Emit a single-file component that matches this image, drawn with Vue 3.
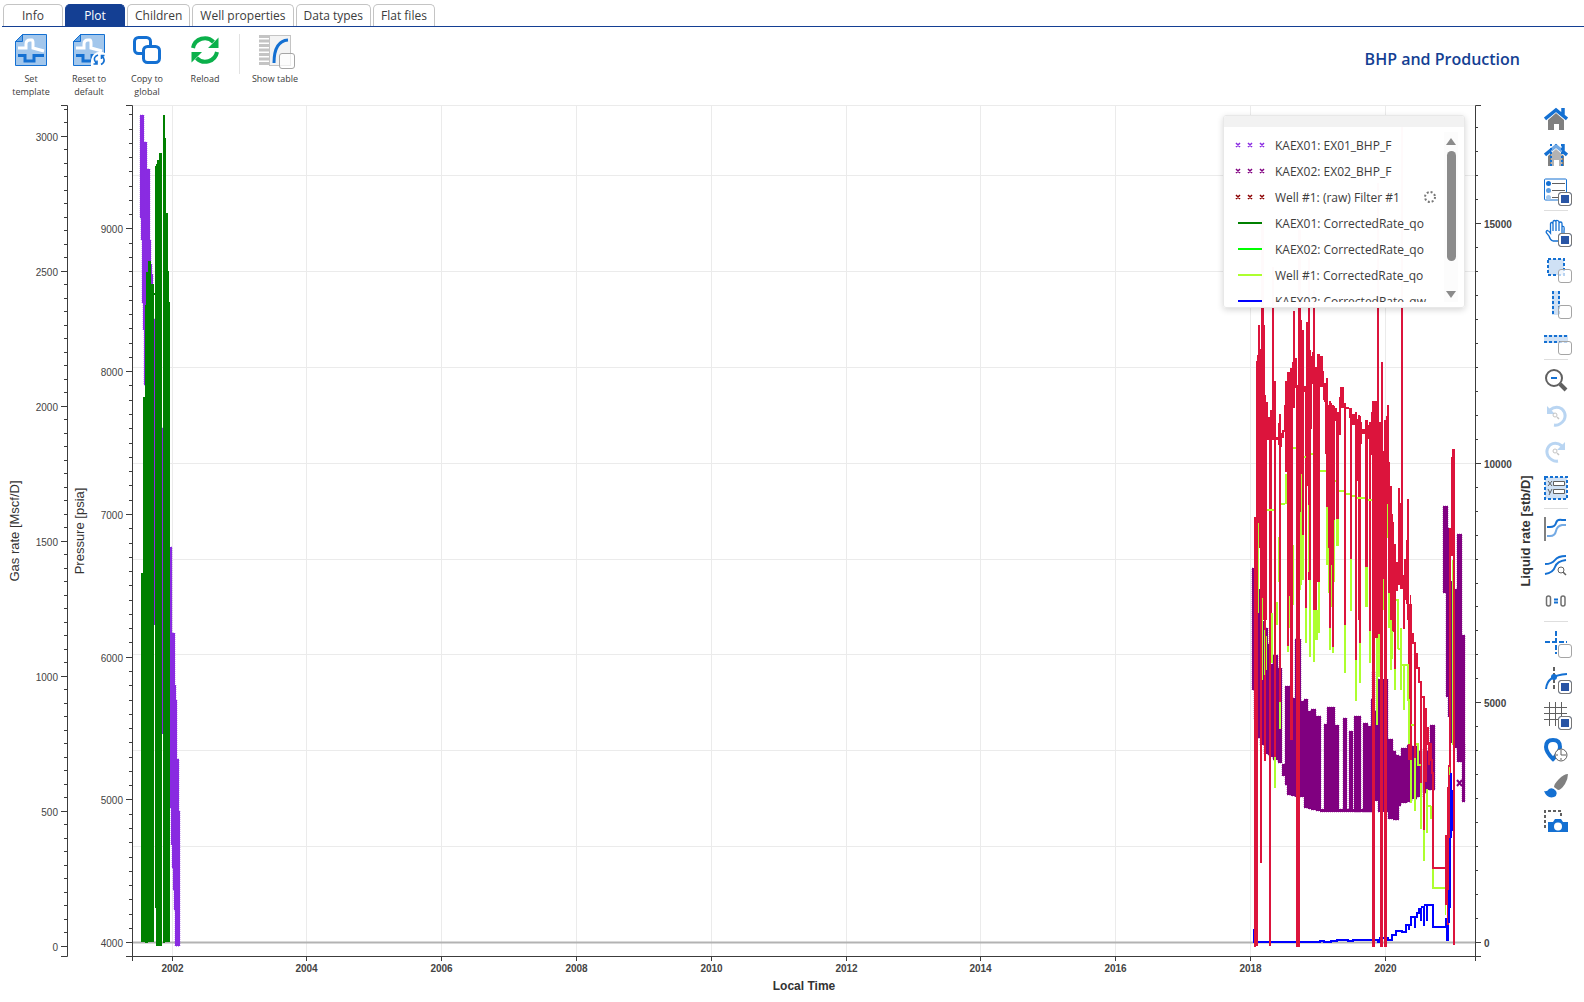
<template>
    <div class="page">
        <nav class="tabs" role="tablist">
            <button
                v-for="tab in tabs"
                :key="tab"
                class="tab"
                role="tab"
                :class="{ active: tab === activeTab }"
                :aria-selected="tab === activeTab"
                @click="activeTab = tab"
            >{{ tab }}</button>
        </nav>

        <header class="toolbar">
            <button class="tool">
                <svg width="32" height="32" viewBox="0 0 32 32">
                    <path d="M7.500 .5H31.500V31.500H.5V7.500Z" fill="#a3c7ec" stroke="#1470d2" />
                    <path d="M.5 7.500H7.500V.5Z" fill="#68a5e3" stroke="#1470d2" />
                    <path d="M3 14H11V10Q11 6 15 6H17Q18 6 18 9V14L29 17" fill="none" stroke="#fff" stroke-width="3" />
                    <path d="M3 21.500H10V27H19V21.500H29" fill="none" stroke="#1470d2" stroke-width="3" />
                </svg>
                <span>Set<br>template</span>
            </button>
            <button class="tool">
                <svg width="32" height="32" viewBox="0 0 32 32">
                    <path d="M7.500 .5H31.500V31.500H.5V7.500Z" fill="#a3c7ec" stroke="#1470d2" />
                    <path d="M.5 7.500H7.500V.5Z" fill="#68a5e3" stroke="#1470d2" />
                    <path d="M3 14H11V10Q11 6 15 6H17Q18 6 18 9V14L29 17" fill="none" stroke="#fff" stroke-width="3" />
                    <path d="M3 21.500H10V27H19V21.500H24" fill="none" stroke="#1470d2" stroke-width="3" />
                    <path d="M18 32Q17 24 21 20Q26 16 32 19V32Z" fill="#fff" />
                    <path d="M25 21Q20 23 22 27L23.500 30M28 30.500Q32.500 28 30.500 24L29 21.500M20.500 30H24V26.500M31.500 21.500H28.500V25" fill="none" stroke="#1470d2" stroke-width="1.600" />
                </svg>
                <span>Reset to<br>default</span>
            </button>
            <button class="tool">
                <svg width="32" height="32" viewBox="0 0 32 32" fill="#fff" stroke="#1470d2" stroke-width="3">
                    <rect x="3.500" y="3.500" width="16" height="16" rx="4" />
                    <rect x="12.500" y="12.500" width="16" height="16" rx="4" />
                </svg>
                <span>Copy to<br>global</span>
            </button>
            <button class="tool">
                <svg width="32" height="32" viewBox="0 0 32 32">
                    <path d="M4 14A12 12 0 0 1 24.500 8M28 18A12 12 0 0 1 7.500 24" fill="none" stroke="#0bb04b" stroke-width="4" />
                    <path d="M29.500 3.500V14H19ZM2.500 28.500V18H13Z" fill="#0bb04b" />
                </svg>
                <span>Reload</span>
            </button>
            <i class="divider"></i>
            <div class="tool table-tool">
                <span class="pic">
                    <svg width="32" height="32" viewBox="0 0 32 32">
                        <rect x="10.500" y="1.500" width="21" height="30" fill="#f3f3f3" stroke="#c4c4c4" />
                        <path d="M0 2.500H10M0 7H10M0 11.500H10M0 16H10M0 20.500H10M0 25H10M0 29.500H10" stroke="#c4c4c4" stroke-width="3" />
                        <path d="M15 29Q15 7 29 6" fill="none" stroke="#1470d2" stroke-width="3" />
                    </svg>
                    <input id="show-table" type="checkbox" class="badge">
                </span>
                <label for="show-table">Show table</label>
            </div>
            <h1>BHP and Production</h1>
        </header>

        <main class="body">
            <div class="chart">
                <svg class="plot" viewBox="0 100 1536 900">
                    <g class="grid">
                        <path v-for="y in gridY" :key="'gy' + y" :d="`M133 ${y}H1475`" />
                        <path v-for="t in years" :key="'gx' + t.label" :d="`M${t.x} 105V956`" />
                    </g>
                    <path d="M133 942.5H1475" stroke="#b3b3b3" stroke-width="2" />

                    <g v-for="s in markerSeries" :key="s.color" :fill="s.color" :stroke="s.color">
                        <path :d="bars(s.data)" stroke="none" />
                        <path :d="bars(s.data)" fill="none" stroke-opacity="0.5" stroke-dasharray="1 1" />
                    </g>
                    <path d="M1457 780l5 6m0-6l-5 6" stroke="#800080" stroke-width="2" />

                    <path :d="bars(green)" fill="#008000" />
                    <path :d="blueLine" fill="none" stroke="#0000ff" stroke-width="2" />
                    <path :d="bars(red)" fill="#dc143c" />
                    <path :d="redLine" fill="none" stroke="#dc143c" stroke-width="2" />
                    <path :d="bars(lime)" fill="#adff2f" />
                    <path :d="limeLine" fill="none" stroke="#adff2f" stroke-width="2" />
                    <path :d="bars(blue)" fill="#0000ff" />

                    <!-- axes -->
                    <g class="axis">
                        <path d="M61 105.5H67.500V956.500H61" />
                        <path d="M126 105.5H132.500V961M126 956.500H1481M1475.500 961V105.500H1481" />
                        <path :d="tickMarks" />
                    </g>
                    <g class="ticks">
                        <text v-for="t in gas" :key="'g' + t.label" x="58" :y="t.y + 4" text-anchor="end">{{ t.label }}</text>
                        <text v-for="t in pressure" :key="'p' + t.label" x="123" :y="t.y + 4" text-anchor="end">{{ t.label }}</text>
                        <text v-for="t in liquid" :key="'l' + t.label" class="bold" x="1484" :y="t.y + 4">{{ t.label }}</text>
                        <text v-for="t in years" :key="'y' + t.label" class="bold" :x="t.x" y="972" text-anchor="middle">{{ t.label }}</text>
                    </g>
                    <text class="title" transform="translate(19 531) rotate(-90)">Gas rate [Mscf/D]</text>
                    <text class="title" transform="translate(84 531) rotate(-90)">Pressure [psia]</text>
                    <text class="title bold" transform="translate(1530 531) rotate(-90)">Liquid rate [stb/D]</text>
                    <text class="title local bold" x="804" y="990">Local Time</text>
                </svg>

                <section class="legend">
                    <div class="grip"></div>
                    <div class="legend-body">
                        <ul>
                            <li v-for="item in legend" :key="item.name">
                                <svg width="30" height="8" viewBox="0 0 30 8" fill="none" :stroke="item.color">
                                    <path v-if="item.marker" d="M1 2l4 4m0-4l-4 4M13 2l4 4m0-4l-4 4M25 2l4 4m0-4l-4 4" stroke-width="1.500" />
                                    <path v-else d="M3 4H27" stroke-width="2" />
                                </svg>
                                <span>{{ item.name }}</span>
                                <svg v-if="item.loading" class="spinner" width="14" height="14" viewBox="0 0 14 14">
                                    <circle cx="7" cy="7" r="5" fill="none" stroke="#777" stroke-width="2" stroke-dasharray="2 1.927" />
                                </svg>
                            </li>
                        </ul>
                        <div class="scrollbar">
                            <i class="up"></i>
                            <i class="thumb"></i>
                            <i class="down"></i>
                        </div>
                    </div>
                </section>
            </div>

            <aside class="side">
                <template v-for="(icon, i) in sideIcons" :key="i">
                    <hr v-if="icon.sep">
                    <div v-else-if="icon.check !== undefined" class="side-item">
                        <svg width="24" height="24" viewBox="0 0 24 24" v-html="icon.art"></svg>
                        <input type="checkbox" class="badge" :aria-label="icon.name" :checked="icon.check">
                    </div>
                    <button v-else class="side-item" :aria-label="icon.name">
                        <svg width="24" height="24" viewBox="0 0 24 24" v-html="icon.art"></svg>
                    </button>
                </template>
            </aside>
        </main>
    </div>
</template>

<script setup>
import { ref } from 'vue'

const tabs = ['Info', 'Plot', 'Children', 'Well properties', 'Data types', 'Flat files']
const activeTab = ref('Plot')

const legend = [
    { name: 'KAEX01: EX01_BHP_F', color: '#8a2be2', marker: true },
    { name: 'KAEX02: EX02_BHP_F', color: '#800080', marker: true },
    { name: 'Well #1: (raw) Filter #1', color: '#8b0000', marker: true, loading: true },
    { name: 'KAEX01: CorrectedRate_qo', color: '#008000' },
    { name: 'KAEX02: CorrectedRate_qo', color: '#00ff00' },
    { name: 'Well #1: CorrectedRate_qo', color: '#adff2f' },
    { name: 'KAEX02: CorrectedRate_qw', color: '#0000ff' },
]

// axis scales
const gasY = v => Math.floor(946.5 - v * 0.27006) + 0.5
const pressureY = v => Math.floor(942.7 - (v - 4000) * 0.14275) + 0.5
const liquidY = v => Math.round(942 - v * 0.04793) + 0.5
const yearX = v => Math.floor(172 + (v - 2002) * 67.4) + 0.5

function range(from, to, step)
{
    const out = []
    for (let v = from; v <= to; v += step) out.push(v)
    return out
}

const gas = range(0, 3000, 500).map(v => ({ label: v, y: gasY(v) }))
const pressure = range(4000, 9000, 1000).map(v => ({ label: v, y: pressureY(v) }))
const liquid = range(0, 15000, 5000).map(v => ({ label: v, y: liquidY(v) }))
const years = range(2002, 2020, 2).map(v => ({ label: v, x: yearX(v) }))
const gridY = [105.5, ...range(2000, 16000, 2000).map(liquidY)]

const tickMarks = [
    ...gas.map(t => `M61 ${t.y}H67`),
    ...range(0, 3100, 50).map(v => `M64 ${gasY(v)}H67`),
    ...pressure.map(t => `M126 ${t.y}H132`),
    ...range(4000, 9800, 100).map(v => `M129 ${pressureY(v)}H132`),
    ...liquid.map(t => `M1476 ${t.y}H1481`),
    ...range(0, 17000, 500).map(v => `M1476 ${liquidY(v)}H1478`),
    ...years.map(t => `M${t.x} 956V961`),
].join('')

// every bar is [left, right, top, bottom]
function bars(list)
{
    return list.map(([l, r, t, b]) => `M${l} ${t}H${r}V${b}H${l}Z`).join('')
}

const violet = [
    [140, 144, 115, 218], [141, 147, 142, 240], [142, 150, 169, 303], [143, 151, 240, 330],
    [144, 152, 264, 385], [151, 153, 274, 385], [154, 155, 319, 625], [162, 163, 428, 734],
    [169, 171, 547, 808], [171, 172, 547, 845], [172, 174, 633, 868], [173, 175, 633, 890],
    [174, 176, 685, 910], [175, 177, 700, 946], [176, 179, 759, 946], [178, 180, 811, 946],
]

const purple = [
    [1252, 1254, 568, 690], [1254, 1258, 581, 720], [1258, 1260, 589, 738], [1260, 1264, 621, 745],
    [1264, 1268, 628, 754], [1268, 1270, 644, 755], [1270, 1273, 664, 757], [1273, 1278, 655, 760],
    [1278, 1282, 668, 763], [1282, 1285, 764, 776], [1285, 1287, 686, 785], [1287, 1291, 686, 795],
    [1291, 1295, 698, 796], [1295, 1301, 639, 797], [1301, 1304, 701, 797], [1304, 1308, 699, 808],
    [1308, 1311, 711, 809], [1311, 1316, 709, 810], [1316, 1321, 716, 811], [1320, 1372, 809, 812],
    [1324, 1327, 724, 811], [1327, 1335, 707, 811], [1335, 1339, 725, 811], [1343, 1347, 718, 811],
    [1349, 1353, 731, 811], [1354, 1361, 716, 812], [1363, 1368, 723, 812], [1368, 1371, 726, 812],
    [1371, 1373, 699, 812], [1372, 1375, 671, 801], [1375, 1378, 711, 801], [1378, 1388, 679, 812],
    [1388, 1393, 739, 819], [1393, 1396, 751, 820], [1396, 1399, 755, 820], [1399, 1401, 756, 806],
    [1401, 1407, 748, 803], [1407, 1412, 745, 802], [1412, 1417, 746, 799], [1417, 1422, 751, 797],
    [1423, 1427, 748, 793], [1427, 1430, 751, 790], [1430, 1435, 725, 790],
    [1443, 1448, 506, 593], [1446, 1450, 528, 697], [1448, 1452, 581, 717], [1450, 1454, 690, 743],
    [1454, 1458, 589, 748], [1457, 1462, 534, 762], [1462, 1465, 635, 760], [1462, 1465, 743, 802],
]

const markerSeries = [
    { color: '#8a2be2', data: violet },
    { color: '#800080', data: purple },
]

const green = [
    [141, 143, 573, 942], [143, 145, 397, 942], [145, 146, 305, 943], [146, 148, 272, 943],
    [148, 151, 261, 942], [151, 154, 284, 942], [154, 155, 293, 295], [155, 156, 166, 908],
    [156, 157, 164, 946], [157, 159, 160, 946], [159, 162, 153, 946], [163, 165, 115, 943],
    [165, 166, 138, 942], [166, 168, 213, 942], [168, 169, 271, 942], [169, 170, 302, 942],
]

const red = [
    // early 2018
    [1254, 1256, 517, 947], [1256, 1258, 361, 946], [1257, 1258, 355, 520], [1258, 1260, 325, 523],
    [1259, 1260, 523, 548], [1260, 1262, 349, 863], [1261, 1264, 220, 598], [1262, 1264, 598, 620],
    [1264, 1265, 325, 761], [1265, 1266, 395, 761], [1266, 1267, 402, 620], [1267, 1268, 402, 440],
    [1268, 1270, 417, 440], [1269, 1271, 417, 946], [1270, 1272, 410, 613], [1272, 1274, 267, 440],
    [1274, 1276, 381, 757], [1276, 1278, 437, 440], [1278, 1279, 423, 445], [1279, 1281, 414, 702],
    [1281, 1282, 433, 447], [1282, 1284, 430, 438], [1284, 1285, 405, 432], [1285, 1287, 381, 472],
    [1287, 1289, 372, 646], [1289, 1290, 372, 596], [1290, 1293, 368, 740], [1292, 1293, 362, 545],
    [1293, 1295, 311, 408], [1295, 1297, 358, 388], [1296, 1300, 385, 947], [1298, 1301, 230, 512],
    [1301, 1302, 320, 474], [1302, 1304, 330, 535], [1304, 1306, 386, 392], [1305, 1307, 386, 608],
    // late 2018 .. 2019
    [1306, 1308, 322, 486], [1308, 1310, 240, 580], [1310, 1311, 350, 580], [1311, 1312, 356, 429],
    [1312, 1313, 352, 384], [1313, 1315, 290, 610], [1315, 1317, 367, 610], [1317, 1320, 354, 582],
    [1320, 1323, 356, 387], [1323, 1324, 371, 400], [1324, 1326, 383, 402], [1325, 1326, 390, 454],
    [1326, 1328, 378, 507], [1328, 1329, 405, 548], [1329, 1331, 401, 628], [1331, 1332, 403, 565],
    [1332, 1334, 405, 647], [1334, 1335, 406, 520], [1335, 1337, 408, 421], [1336, 1339, 412, 519],
    [1339, 1341, 397, 435], [1340, 1344, 387, 408], [1344, 1346, 403, 625], [1346, 1349, 407, 409],
    [1349, 1350, 408, 418], [1350, 1352, 408, 559], [1352, 1355, 414, 425], [1355, 1357, 412, 660],
    [1357, 1359, 419, 481], [1358, 1360, 415, 620], [1359, 1361, 416, 643], [1361, 1362, 422, 444],
    [1362, 1366, 429, 434], [1365, 1368, 420, 567], [1367, 1369, 425, 439], [1369, 1371, 422, 631],
    [1371, 1373, 412, 455], [1372, 1375, 401, 947], [1375, 1378, 401, 638], [1377, 1379, 183, 638],
    [1379, 1380, 422, 634], [1380, 1383, 422, 947], [1381, 1383, 362, 630], [1383, 1384, 451, 579],
    [1384, 1387, 420, 947], [1386, 1387, 416, 947],
    // 2020
    [1387, 1389, 405, 504], [1388, 1390, 462, 593], [1390, 1392, 486, 620], [1391, 1393, 514, 632],
    [1393, 1394, 522, 632], [1394, 1396, 544, 669], [1396, 1398, 562, 591], [1398, 1400, 488, 585],
    [1400, 1401, 503, 589], [1401, 1403, 115, 589], [1403, 1405, 575, 629], [1404, 1406, 559, 600],
    [1406, 1407, 540, 604], [1407, 1409, 499, 620], [1408, 1412, 604, 760], [1410, 1411, 595, 640],
    [1414, 1416, 645, 758], [1420, 1422, 683, 783], [1423, 1425, 702, 830], [1425, 1427, 710, 782],
    [1428, 1430, 742, 765],
    [1445, 1447, 835, 905], [1447, 1449, 787, 937], [1448, 1450, 765, 850], [1449, 1451, 528, 773],
    [1451, 1453, 457, 556], [1452, 1455, 449, 556], [1453, 1455, 449, 945],
]
const redLine = 'M1411 613V634H1413V643H1415V654H1417V668H1419V682H1421V697H1424V709H1426V728H1428V744H1431V760H1432V773H1433V868H1445'

const lime = [
    [1258, 1259, 523, 613], [1262, 1263, 598, 680], [1264, 1265, 630, 675], [1266, 1267, 636, 670],
    [1271, 1273, 613, 663], [1276, 1278, 602, 625], [1278, 1279, 537, 582], [1279, 1281, 702, 729],
    [1274, 1276, 757, 788], [1285, 1287, 474, 504], [1289, 1290, 596, 628], [1287, 1289, 646, 652],
    [1293, 1294, 545, 605], [1300, 1301, 512, 590], [1301, 1302, 474, 585], [1302, 1304, 535, 580],
    [1305, 1307, 608, 643], [1308, 1309, 505, 572], [1309, 1311, 580, 657], [1313, 1315, 610, 662],
    [1315, 1318, 610, 640], [1318, 1320, 582, 633], [1326, 1328, 507, 565], [1328, 1329, 548, 593],
    [1329, 1331, 628, 650], [1331, 1332, 565, 607], [1332, 1334, 647, 653], [1334, 1335, 520, 582],
    [1336, 1339, 519, 546], [1344, 1346, 625, 673], [1350, 1352, 559, 611], [1355, 1357, 660, 701],
    [1359, 1361, 643, 683], [1365, 1368, 567, 607], [1369, 1371, 631, 663], [1376, 1378, 638, 725],
    [1378, 1380, 634, 677], [1383, 1384, 579, 610], [1387, 1388, 504, 538], [1388, 1390, 593, 628],
    [1390, 1392, 620, 670], [1392, 1393, 631, 659], [1394, 1396, 669, 690], [1397, 1399, 599, 649],
    [1400, 1402, 628, 690], [1403, 1405, 665, 710], [1407, 1409, 667, 700], [1410, 1412, 760, 803],
    [1414, 1416, 758, 811], [1420, 1422, 783, 829], [1423, 1425, 830, 861], [1426, 1428, 789, 833],
    [1430, 1432, 806, 819], [1445, 1446, 905, 915], [1452, 1453, 560, 745], [1449, 1450, 767, 775],
]
const limeLine = 'M1267 510H1274M1281 504H1285M1293 448H1296M1304 457H1306M1311 454H1313M1320 471H1326M1335 481H1336'
    + 'M1339 491H1344M1346 494H1350M1352 496H1355M1357 498H1365M1368 500H1372M1396 600H1399M1398 649H1401'
    + 'M1401 665H1408V700H1409V744M1411 725H1414M1416 744H1418V765H1421M1427 806H1431M1433 869V888H1445'

const blue = [
    [1450, 1452, 773, 838], [1451, 1453, 790, 831], [1449, 1451, 838, 908], [1448, 1450, 890, 923],
    [1445, 1447, 918, 927], [1446, 1449, 925, 941],
]
const blueLine = 'M1254 929V942H1320V941H1324V942H1331V941H1337V940H1348V941H1353V940H1378V942H1380V938H1388V940H1392'
    + 'V935H1396V931H1402V932H1406V925H1409V930M1409 925H1411V917H1415V928M1415 917H1417V913H1419V909H1421V921'
    + 'M1421 907H1424V926M1424 905H1427V921M1427 905H1433V927H1446'

// right side toolbar drawings
const B = '#1470d2'
const house = '<path d="M4 14L12 7L20 14V24H15V18H10V24H4Z" fill="#808080"/><path d="M1 13L12 4L23 13M19 9V2" fill="none" stroke="#1470d2" stroke-width="3.500"/>'
const sideIcons = [
    { name: 'Home', art: house },
    { name: 'Home in selection', art: house + '<path d="M7 3V24H18V3Z" fill="#fff" opacity=".4"/><path d="M7 2V24M18 2V24" stroke="#1470d2" stroke-width="2" stroke-dasharray="2 2"/>' },
    { name: 'Legend', check: true, art: `<rect x=".5" y="1" width="22" height="21" rx="1" fill="#fff" stroke="${B}"/><path d="M8 5.500H21M8 12.500H21M8 19.500H21" stroke="#606060"/><circle cx="4.500" cy="5.500" r="2.500" fill="${B}"/><circle cx="4.500" cy="12.500" r="2.500" fill="#5c9de0"/><circle cx="4.500" cy="19.500" r="2.500" fill="#a3c7ec"/>` },
    { sep: true },
    { name: 'Pan', check: true, art: `<path d="M9 22Q6 21 5 17L2.500 14Q1.500 12 3.500 11.500Q5 12 6.500 14V5Q6.500 3.500 7.700 3.500T9 5V12V3Q9 1.500 10.500 1.500T12 3V12V2.500Q12 1 13.500 1.500T15 3V12V4.500Q15 3 16.500 3T18 4.500V14V8Q18.500 7 19.500 7.500Q20.500 8 20 12V18L18 22Z" fill="#fff" stroke="${B}" stroke-width="1.300"/>` },
    { name: 'Box select', check: false, art: `<rect x="4" y="4" width="16" height="16" fill="#cfe1f5" stroke="${B}" stroke-width="2" stroke-dasharray="3 2"/>` },
    { name: 'Vertical select', check: false, art: `<path d="M8 0H16V24H8Z" fill="#cfe1f5"/><path d="M9 0V24M15 0V24" stroke="${B}" stroke-width="2" stroke-dasharray="3 2"/>` },
    { name: 'Horizontal select', check: false, art: `<path d="M0 8H24V16H0Z" fill="#cfe1f5"/><path d="M0 9H24M0 15H24" stroke="${B}" stroke-width="2" stroke-dasharray="3 2"/>` },
    { sep: true },
    { name: 'Zoom out', art: `<circle cx="10" cy="10" r="8" fill="none" stroke="#606060" stroke-width="2"/><path d="M16 16L22 22" stroke="#606060" stroke-width="4"/><path d="M7 10H13" stroke="${B}" stroke-width="2"/>` },
    { name: 'Previous zoom', art: '<path d="M6 6Q12 1 18 5Q23 10 20 16Q16 22 10 21" fill="none" stroke="#b9d5f2" stroke-width="3"/><path d="M3 2V10H11Z" fill="#b9d5f2"/><circle cx="11" cy="11" r="2" fill="none" stroke="#c4c4c4"/><path d="M13 13L15 15" stroke="#c4c4c4" stroke-width="1.500"/>' },
    { name: 'Next zoom', art: '<path d="M18 6Q12 1 6 5Q1 10 4 16Q8 22 14 21" fill="none" stroke="#b9d5f2" stroke-width="3"/><path d="M21 2V10H13Z" fill="#b9d5f2"/><circle cx="11" cy="11" r="2" fill="none" stroke="#c4c4c4"/><path d="M13 13L15 15" stroke="#c4c4c4" stroke-width="1.500"/>' },
    { name: 'Axis limits', art: `<rect x="1" y="1" width="22" height="22" fill="#cfe1f5" stroke="${B}" stroke-width="2" stroke-dasharray="3 2"/><path d="M4 5L8 10M8 5L4 10M4 13L6 17M8 13L5 19" fill="none" stroke="#606060"/><path d="M9.500 5.500H20.500V9.500H9.500ZM9.500 13.500H20.500V17.500H9.500Z" fill="#fff" stroke="#606060"/>` },
    { sep: true },
    { name: 'Align curves', art: `<path d="M1 0V24" stroke="#808080" stroke-width="2"/><path d="M3 19H6Q11 19 12 14T18 8H22" fill="none" stroke="#74aae4" stroke-width="2"/><path d="M3 10H6Q11 10 12 6T18 3H22" fill="none" stroke="${B}" stroke-width="2"/>` },
    { name: 'Inspect curves', art: `<path d="M1 21Q9 20 11 14T22 7M1 11Q8 11 11 7T22 3" fill="none" stroke="${B}" stroke-width="2"/><circle cx="17" cy="17" r="3" fill="#fff" stroke="#606060"/><path d="M19 19L22 22" stroke="#606060" stroke-width="1.500"/>` },
    { name: 'Zero reference', art: `<rect x="2.500" y="7" width="4" height="10" rx="2" fill="none" stroke="#707070" stroke-width="1.500"/><rect x="17" y="7" width="4" height="10" rx="2" fill="none" stroke="#707070" stroke-width="1.500"/><path d="M10 10.500H14M10 13.500H14" stroke="${B}" stroke-width="2"/>` },
    { sep: true },
    { name: 'Crosshair', check: false, art: `<path d="M12 1V24M1 12H23" stroke="${B}" stroke-width="2" stroke-dasharray="5 2"/>` },
    { name: 'Snap to curve', check: true, art: `<path d="M10 1V23" stroke="#606060" stroke-width="2" stroke-dasharray="4 2"/><path d="M2 23Q3 9 23 8" fill="none" stroke="${B}" stroke-width="2"/><circle cx="10" cy="11" r="3" fill="${B}"/>` },
    { name: 'Grid', check: true, art: '<path d="M5.500 0V24M11.500 0V24M17.500 0V24M0 5.500H23M0 11.500H23M0 17.500H23" stroke="#606060"/>' },
    { name: 'Time marker', art: `<path d="M9 2Q2 2 2 9Q2 14 9 21Q16 14 16 9Q16 2 9 2Z" fill="none" stroke="${B}" stroke-width="4"/><circle cx="17" cy="17" r="6" fill="#fff" stroke="#606060"/><path d="M17 12V17H22M12 17H14M17 20V22" fill="none" stroke="#606060"/>` },
    { name: 'Style', art: `<path d="M24 0Q20 0 15 5Q10 10 10 13L14 16Q17 16 21 10Q24 5 24 0Z" fill="#808080"/><path d="M0 17Q3 18 5 15Q9 13 12 17Q14 21 10 23Q3 25 0 17Z" fill="${B}"/>` },
    { name: 'Snapshot', art: `<path d="M1 18V1H17V8" fill="none" stroke="#606060" stroke-width="2" stroke-dasharray="3 2"/><path d="M4 12H9L11 9H17L19 12H24V22H4Z" fill="${B}"/><circle cx="14" cy="16.500" r="4" fill="#fff"/>` },
]
</script>

<style>
body {
    background: #fff;
}
</style>

<style scoped>
.page {
    font-family: "Segoe UI", "Open Sans", "Noto Sans", sans-serif;
    color: #3c3c3c;
}

button {
    font: inherit;
    color: inherit;
    background: none;
    border: none;
    padding: 0;
    cursor: pointer;
}

.tabs {
    display: flex;
    gap: 2px;
    margin-left: 2px;
    padding: 4px 1px 0;
    border-bottom: 1px solid #143f93;
}

.tab {
    height: 22px;
    min-width: 60px;
    padding: 0 7px;
    border: 1px solid #c4c4c4;
    border-bottom: none;
    border-radius: 5px 5px 0 0;
    font-size: 12px;
    line-height: 21px;
}

.tab.active {
    background: #143f93;
    border-color: #143f93;
    color: #fff;
}

.toolbar {
    display: flex;
    align-items: flex-start;
    height: 66px;
    padding: 7px 64px 0 2px;
}

.tool {
    width: 58px;
    display: flex;
    flex-direction: column;
    align-items: center;
    gap: 6px;
    font-size: 9px;
    line-height: 13px;
    text-align: center;
}

.tool svg {
    display: block;
}

.divider {
    width: 1px;
    height: 40px;
    margin-left: 5px;
    background: #e2e2e2;
}

.table-tool {
    width: 70px;
}

.pic,
.side-item {
    position: relative;
}

.badge {
    appearance: none;
    position: absolute;
    box-sizing: border-box;
    left: 14px;
    top: 14px;
    width: 14px;
    height: 14px;
    margin: 0;
    border: 1px solid #a5a5a5;
    border-radius: 3px;
    background: rgba(255, 255, 255, 0.7);
}

.badge:checked {
    border-color: #777;
    background: #2955a5;
    box-shadow: inset 0 0 0 2px #fff;
}

.pic .badge {
    left: 20px;
    top: 19px;
    width: 16px;
    height: 16px;
}

h1 {
    margin: 13px 0 0 auto;
    font-size: 16px;
    line-height: 24px;
    font-weight: 600;
    color: #143f93;
}

.body {
    display: flex;
}

.chart {
    position: relative;
    flex: 1;
    min-width: 0;
}

.plot {
    display: block;
    width: 100%;
    height: auto;
    font-family: "Liberation Sans", Arial, sans-serif;
}

.grid path {
    stroke: #ebebeb;
}

.axis path {
    fill: none;
    stroke: #3c3c3c;
}

.ticks text {
    font-size: 10px;
    fill: #444;
}

.plot .bold {
    font-weight: bold;
}

.title {
    font-size: 13px;
    fill: #333;
    text-anchor: middle;
}

.local {
    font-size: 12px;
}

.legend {
    position: absolute;
    top: 15px;
    right: 71px;
    width: 240px;
    border: 1px solid #e8e8e8;
    border-radius: 3px;
    background: rgba(255, 255, 255, 0.98);
    box-shadow: 0 2px 6px rgba(0, 0, 0, 0.16);
    overflow: hidden;
}

.grip {
    height: 11px;
    background: #f2f2f2;
}

.legend-body {
    display: flex;
    height: 170px;
    margin: 5px 6px 5px 11px;
    overflow: hidden;
}

ul {
    flex: 1;
    height: 170px;
    margin: 0;
    padding: 0;
    list-style: none;
    overflow: hidden;
    font-size: 12px;
}

li {
    display: flex;
    align-items: center;
    height: 26px;
    white-space: nowrap;
}

li span {
    margin-left: 10px;
}

.spinner {
    margin-left: auto;
    margin-right: 7px;
}

.scrollbar {
    width: 14px;
    display: flex;
    flex-direction: column;
    align-items: center;
    background: #fcfcfc;
}

.scrollbar .thumb {
    width: 9px;
    height: 110px;
    border-radius: 5px;
    background: #8b8b8b;
}

.up,
.down {
    border: 5px solid transparent;
}

.up {
    border-top: none;
    border-bottom: 7px solid #8b8b8b;
    margin: 6px 0;
}

.down {
    border-bottom: none;
    border-top: 7px solid #8b8b8b;
    margin-top: auto;
    margin-bottom: 4px;
}

.side {
    width: 40px;
    padding: 6px 0 0 8px;
    display: flex;
    flex-direction: column;
    align-items: flex-start;
    gap: 12px;
}

.side-item {
    width: 24px;
    height: 24px;
}

.side-item svg {
    display: block;
}

hr {
    width: 24px;
    height: 1px;
    margin: -4px 0;
    border: none;
    background: #dedede;
}
</style>
